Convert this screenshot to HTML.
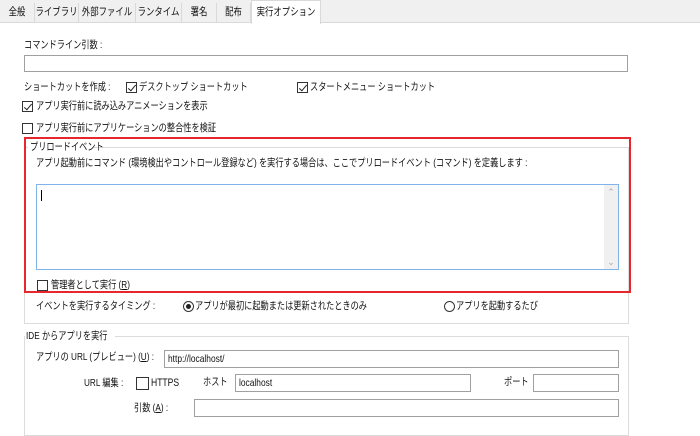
<!DOCTYPE html>
<html><head><meta charset="utf-8"><style>
*{box-sizing:border-box;margin:0;padding:0}
body{width:700px;height:426px;background:#fff;font-family:"Liberation Sans","Noto Sans CJK JP",sans-serif;font-size:10.5px;color:#111;position:relative;overflow:hidden}
.a{position:absolute;white-space:nowrap;line-height:13px;transform:scaleX(0.78);transform-origin:0 0}
.tabs{position:absolute;left:0;top:0;width:700px;height:23px;background:#f0f0f0;border-bottom:1px solid #d9d9d9}
.tab{position:absolute;top:3px;height:20px;line-height:18px;border-right:1px solid #d9d9d9;white-space:nowrap}
.tab span,.act span{display:block;text-align:center;transform:scaleX(0.8);transform-origin:50% 0;margin:0 -10px}
.act{position:absolute;top:0;height:24px;line-height:22px;background:#fff;border:1px solid #d9d9d9;border-bottom:none;white-space:nowrap}
.in{position:absolute;border:1px solid #a0a0a0;background:#fff}
.in span{position:absolute;left:3px;top:1px;white-space:nowrap;transform:scaleX(0.8);transform-origin:0 0;line-height:14px}
.cb{position:absolute;width:11px;height:11px;border:1px solid #333;background:#fff}
.cb.c::after{content:"";position:absolute;left:3px;top:0px;width:3px;height:7px;border:solid #222;border-width:0 1.2px 1.2px 0;transform:rotate(40deg)}
.rd{position:absolute;width:11px;height:11px;border:1px solid #333;border-radius:50%;background:#fff}
.rd.c::after{content:"";position:absolute;left:2px;top:2px;width:5px;height:5px;border-radius:50%;background:#222}
.grp{position:absolute;border:1px solid #dcdcdc}
</style></head><body>
<div class="tabs">
<div class="tab" style="left:0;width:35px"><span>全般</span></div>
<div class="tab" style="left:35px;width:44px"><span>ライブラリ</span></div>
<div class="tab" style="left:79px;width:57px"><span>外部ファイル</span></div>
<div class="tab" style="left:136px;width:46px"><span>ランタイム</span></div>
<div class="tab" style="left:182px;width:35px"><span>署名</span></div>
<div class="tab" style="left:217px;width:34px"><span>配布</span></div>
</div>
<div class="act" style="left:251px;width:70px"><span>実行オプション</span></div>

<div class="a" style="left:24px;top:39px">コマンドライン引数 :</div>
<div class="in" style="left:24px;top:55px;width:604px;height:17px"></div>

<div class="a" style="left:24px;top:81px">ショートカットを作成 :</div>
<div class="cb c" style="left:126px;top:82px"></div><div class="a" style="left:139px;top:81px">デスクトップ ショートカット</div>
<div class="cb c" style="left:297px;top:82px"></div><div class="a" style="left:310px;top:81px">スタートメニュー ショートカット</div>

<div class="cb c" style="left:22px;top:101px"></div><div class="a" style="left:36px;top:100px">アプリ実行前に読み込みアニメーションを表示</div>
<div class="cb" style="left:22px;top:123px"></div><div class="a" style="left:36px;top:122px">アプリ実行前にアプリケーションの整合性を検証</div>

<div class="grp" style="left:24px;top:147px;width:605px;height:177px"></div>
<div style="position:absolute;left:28px;top:141px;width:66px;height:12px;background:#fff"></div>
<div class="a" style="left:30px;top:141px">プリロードイベント</div>
<div class="a" style="left:36px;top:157px">アプリ起動前にコマンド (環境検出やコントロール登録など) を実行する場合は、ここでプリロードイベント (コマンド) を定義します :</div>
<div style="position:absolute;left:36px;top:184px;width:583px;height:86px;border:1px solid #7eb4ea;background:#fff">
<div style="position:absolute;left:4px;top:5px;width:1px;height:11px;background:#000"></div>
<div style="position:absolute;right:0;top:0;width:14px;height:84px;background:#f0f0f0;color:#aaa;font-size:9px;text-align:center"><div style="margin-top:2px">⌃</div><div style="position:absolute;bottom:1px;width:14px">⌄</div></div>
</div>
<div class="cb" style="left:37px;top:280px"></div><div class="a" style="left:51px;top:279px">管理者として実行 (<u>R</u>)</div>
<div style="position:absolute;left:24px;top:137px;width:607px;height:156px;border:2px solid #e8262d"></div>

<div class="a" style="left:36px;top:300px">イベントを実行するタイミング :</div>
<div class="rd c" style="left:183px;top:301px"></div><div class="a" style="left:195px;top:300px">アプリが最初に起動または更新されたときのみ</div>
<div class="rd" style="left:444px;top:301px"></div><div class="a" style="left:456px;top:300px">アプリを起動するたび</div>

<div class="grp" style="left:24px;top:336px;width:605px;height:100px"></div>
<div style="position:absolute;left:25px;top:330px;width:90px;height:12px;background:#fff"></div>
<div class="a" style="left:26px;top:330px">IDE からアプリを実行</div>
<div class="a" style="left:36px;top:351px">アプリの URL (プレビュー) (<u>U</u>) :</div>
<div class="in" style="left:164px;top:350px;width:455px;height:18px"><span>http://localhost/</span></div>
<div class="a" style="left:84px;top:377px">URL 編集 :</div>
<div class="cb" style="left:136px;top:377px;width:13px;height:13px"></div><div class="a" style="left:151px;top:377px;font-size:11px">HTTPS</div>
<div class="a" style="left:203px;top:376px">ホスト</div>
<div class="in" style="left:235px;top:374px;width:236px;height:18px"><span>localhost</span></div>
<div class="a" style="left:504px;top:376px">ポート</div>
<div class="in" style="left:533px;top:374px;width:86px;height:18px"></div>
<div class="a" style="left:134px;top:402px">引数 (<u>A</u>) :</div>
<div class="in" style="left:194px;top:399px;width:425px;height:18px"></div>
</body></html>
